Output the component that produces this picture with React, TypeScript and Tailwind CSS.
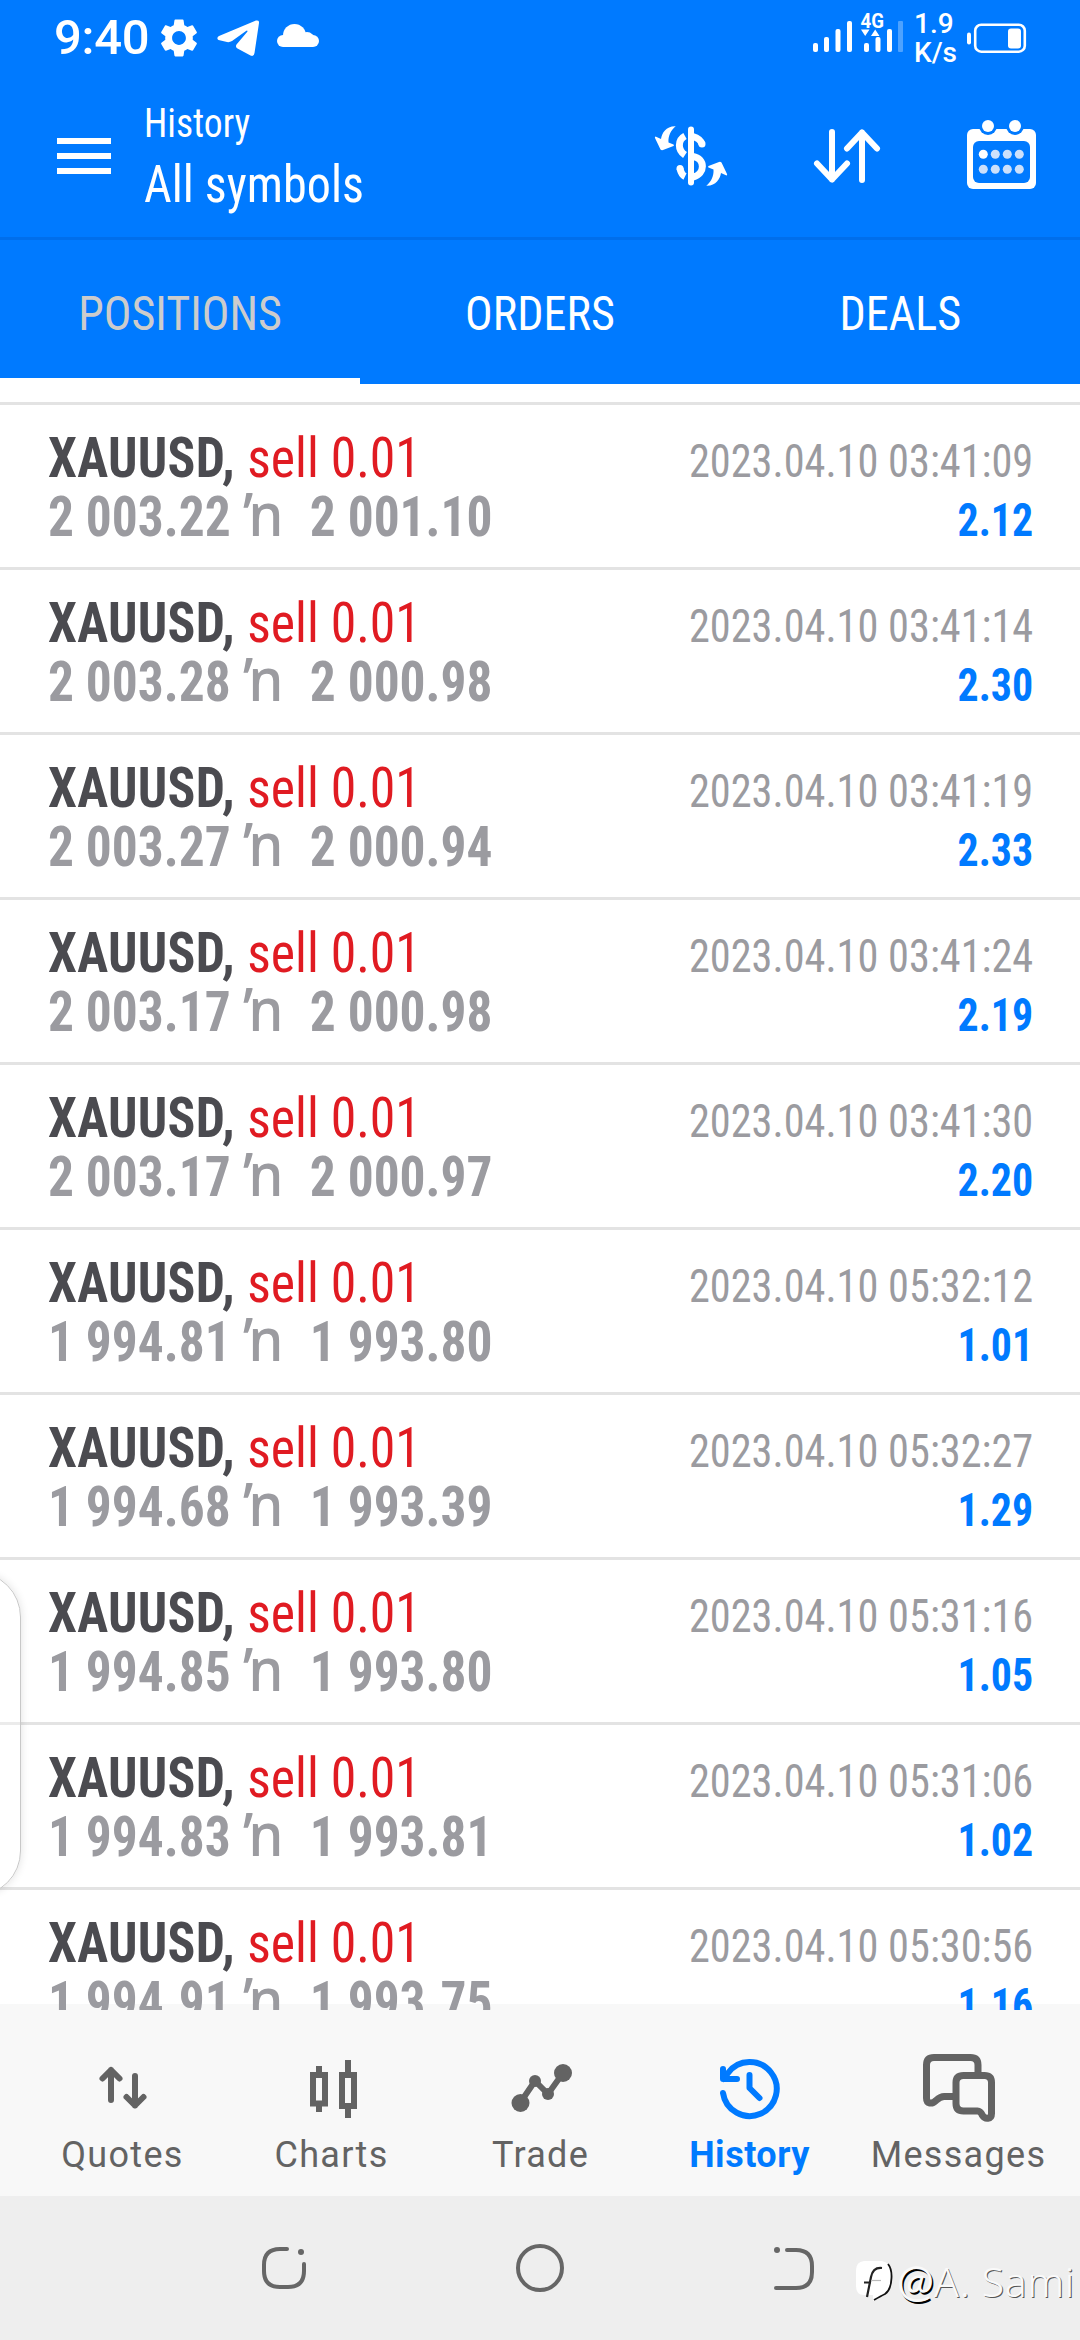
import { useState } from "react"
import type { ReactNode } from "react"
import { MdSettings } from "react-icons/md"

const positions = [
  { open: "2 003.22", close: "2 001.10", time: "2023.04.10 03:41:09", profit: "2.12" },
  { open: "2 003.28", close: "2 000.98", time: "2023.04.10 03:41:14", profit: "2.30" },
  { open: "2 003.27", close: "2 000.94", time: "2023.04.10 03:41:19", profit: "2.33" },
  { open: "2 003.17", close: "2 000.98", time: "2023.04.10 03:41:24", profit: "2.19" },
  { open: "2 003.17", close: "2 000.97", time: "2023.04.10 03:41:30", profit: "2.20" },
  { open: "1 994.81", close: "1 993.80", time: "2023.04.10 05:32:12", profit: "1.01" },
  { open: "1 994.68", close: "1 993.39", time: "2023.04.10 05:32:27", profit: "1.29" },
  { open: "1 994.85", close: "1 993.80", time: "2023.04.10 05:31:16", profit: "1.05" },
  { open: "1 994.83", close: "1 993.81", time: "2023.04.10 05:31:06", profit: "1.02" },
  { open: "1 994.91", close: "1 993.75", time: "2023.04.10 05:30:56", profit: "1.16" },
]

const tabs = ["POSITIONS", "ORDERS", "DEALS"]

function StatusBar() {
  return (
    <div className="flex h-[75px] items-center pl-[54px] pr-[53px] text-white">
      <span className="w-[102px] text-[49px] leading-none font-medium tracking-[-0.3px]">9:40</span>
      <MdSettings className="size-[46px]" />
      <svg className="ml-[15px] h-9 w-[42px]" viewBox="0 0 42 36" fill="currentColor">
        <path d="M2 16 39 .5Q42.5 0 42 3L37.5 33Q37 37 33.5 35.5L20.5 28.5Q18 27 19.5 24.5L30.5 11.5Q30.5 10 29 11L15 21Q12.5 22.5 10 22L1.5 20Q-1 18 2 16Z" />
      </svg>
      <svg className="mb-1 ml-[18px] h-[23px] w-[42px]" viewBox="0 0 42 23" fill="currentColor">
        <circle cx="17.5" cy="11.5" r="11.5" />
        <circle cx="6" cy="17" r="6" />
        <circle cx="30" cy="15.5" r="7.5" />
        <circle cx="36" cy="17" r="6" />
        <rect x="6" y="12" width="30" height="11" />
      </svg>

      <svg className="ml-auto h-[75px] w-[93px]" viewBox="811 0 93 75" fill="currentColor">
        <rect x="812" y="43" width="5" height="9" rx="2" />
        <rect x="823" y="37" width="5" height="15" rx="2" />
        <rect x="834.5" y="29" width="5" height="23" rx="2" />
        <rect x="846" y="21" width="5" height="31" rx="2" />
        <text x="859.5" y="28" fontSize="20" fontWeight="700" textLength="23.5" lengthAdjust="spacingAndGlyphs">
          4G
        </text>
        <path d="M860 29.5h8.5L864.2 36zM870 36h8.5L874.2 29.5z" />
        <rect x="863" y="43" width="5" height="9" rx="2" />
        <rect x="874.5" y="37" width="5" height="15" rx="2" />
        <rect x="886" y="29" width="5" height="23" rx="2" />
        <rect x="897" y="21" width="5" height="31" rx="1" opacity="0.3" />
      </svg>
      <div className="ml-[9px] w-[45px] text-[28px] leading-[29px] font-medium">
        <div>1.9</div>
        <div>K/s</div>
      </div>
      <svg className="ml-2 h-[30px] w-[60px]" viewBox="966 20.5 60 30">
        <rect x="966" y="30" width="4" height="12" rx="2" fill="currentColor" />
        <rect x="974.2" y="22.2" width="49.6" height="27" rx="6" fill="none" stroke="currentColor" strokeWidth="2.6" />
        <rect x="1007" y="26" width="13" height="20" rx="3" fill="currentColor" />
      </svg>
    </div>
  )
}

function DollarIcon() {
  const arrow =
    "M24.7 6.3C15 6 11 13 10 19L4.5 16.5Q3.5 17 4 18L9.5 29.5Q10.5 30.5 12 30L22.5 26Q23.5 25 22.5 24.5L17.5 22.5C17 16 20 10 24.7 6.3Z"
  return (
    <svg className="h-[72px] w-20" viewBox="0 0 80 72" fill="none" stroke="currentColor" strokeWidth="7">
      <path d="M40 9.500V62.500" strokeWidth="6" strokeLinecap="round" />
      <path d="M34 16C26.500 20 26.500 30 34 35M42 16.500Q49 18.500 51 24" />
      <path d="M42 36.500C54.500 38.500 54.500 54 42 57M29 48.500C30 53 31 55 34 56.500" />
      <circle cx="51" cy="24" r="3.5" fill="currentColor" stroke="none" />
      <circle cx="29" cy="48.5" r="3.5" fill="currentColor" stroke="none" />
      <g fill="currentColor" stroke="none">
        <path d={arrow} />
        <path d={arrow} transform="rotate(180 40 36)" />
      </g>
    </svg>
  )
}

function SortIcon() {
  return (
    <svg
      className="h-[60px] w-[68px]"
      viewBox="812 126 68 60"
      fill="none"
      stroke="currentColor"
      strokeWidth="6"
      strokeLinecap="round"
      strokeLinejoin="round"
    >
      <path d="M831 132V179.500M816 163.500 831 179.500 846 163.500" />
      <path d="M861 180V132.500M846 148.500 861 132.500 876 148.500" />
    </svg>
  )
}

function CalendarIcon() {
  return (
    <svg className="h-[69px] w-[69px]" viewBox="966 120 69 69">
      <rect x="966" y="129" width="69" height="60" rx="6" fill="#fff" />
      <rect x="972" y="141" width="57" height="42" rx="6" fill="#007aff" />
      {[987, 1014].map((x) => (
        <g key={x}>
          <circle cx={x} cy="126" r="9" fill="#007aff" />
          <circle cx={x} cy="126" r="6" fill="#fff" />
        </g>
      ))}
      {[982.3, 994.3, 1006.3, 1018.3].map((x, i) => (
        <g key={x}>
          <circle cx={x} cy="154.3" r="4.5" fill={i === 0 ? "#fff" : "#cce0fb"} />
          <circle cx={x} cy="169.3" r="4.5" fill="#cce0fb" />
        </g>
      ))}
    </svg>
  )
}

function Header() {
  return (
    <header className="flex h-[162px] pr-[44px] pl-[57px] text-white">
      <button className="mt-[63px] flex h-9 w-[54px] flex-col justify-between">
        <span className="h-1.5 w-full bg-white" />
        <span className="h-1.5 w-full bg-white" />
        <span className="h-1.5 w-full bg-white" />
      </button>
      <div className="ml-[33px] pt-[24px] font-stretch-condensed">
        <div className="origin-left scale-x-[0.94] text-[40px] leading-[50px]">History</div>
        <div className="mt-[3px] origin-left scale-x-[0.925] text-[52px] leading-[66px]">All symbols</div>
      </div>
      <div className="ml-auto flex pt-[45px]">
        <DollarIcon />
        <div className="ml-[82px] pt-1.5">
          <SortIcon />
        </div>
        <div className="ml-[86px]">
          <CalendarIcon />
        </div>
      </div>
    </header>
  )
}

function PositionRow({ open, close, time, profit }: (typeof positions)[number]) {
  return (
    <li className="h-[165px] shrink-0 border-t-3 border-[#e3e3e3] pt-6 pr-[47px] pl-12 leading-[59px] font-stretch-condensed">
      <div className="flex items-baseline justify-between">
        <div className="origin-left scale-x-[0.94] text-[55px] whitespace-pre">
          <span className="font-bold tracking-[0.3px] text-[#4b4b50]">XAUUSD, </span>
          <span className="text-[#e01b22]">sell 0.01</span>
        </div>
        <div className="origin-right scale-x-[0.92] text-[46px] text-[#9b9ba0]">{time}</div>
      </div>
      <div className="-mt-[3px] flex items-baseline justify-between">
        <div className="flex origin-left scale-x-[0.935] items-baseline text-[55px] font-bold text-[#9b9ba0]">
          <span className="w-[209px]">{open}</span>
          <span className="w-[71px] font-['Noto_Sans'] text-[60px] leading-0 font-medium">ŉ</span>
          <span>{close}</span>
        </div>
        <div className="origin-right scale-x-[0.91] text-[46px] font-bold text-[#007aff]">{profit}</div>
      </div>
    </li>
  )
}

function NavItem({ label, active, children }: { label: string; active?: boolean; children: ReactNode }) {
  return (
    <button className={`flex w-[209px] flex-col items-center ${active ? "text-[#007aff]" : "text-[#636363]"}`}>
      <svg
        className="h-[78px] w-[78px]"
        viewBox="0 0 78 78"
        fill="none"
        stroke="currentColor"
        strokeWidth="6"
        strokeLinecap="round"
        strokeLinejoin="round"
      >
        {children}
      </svg>
      <span
        className={
          active
            ? "mt-[7px] text-[36px] leading-[42px] font-bold tracking-[0.5px]"
            : "mt-[7px] text-[36px] leading-[42px] tracking-[1.3px]"
        }
      >
        {label}
      </span>
    </button>
  )
}

function BottomNav() {
  return (
    <nav className="flex h-[186px] bg-[#f8f8f8] pt-[39px] pl-[18px]">
      <NavItem label="Quotes">
        <path d="M27 51V21M18.500 29.500 27 21 35.500 29.500" />
        <path d="M51 27V56.500M42.500 48 51 56.500 59.500 48" />
      </NavItem>
      <NavItem label="Charts">
        <g strokeLinecap="butt" strokeLinejoin="miter">
          <path d="M26 17V26M26 55V63M55 11V26M55 57V69" />
          <path d="M20 26H32V54.500H20ZM49 26H61V57H49Z" />
        </g>
      </NavItem>
      <NavItem label="Trade">
        <path d="M18 54 33 32 46 45 61 24" />
        <g fill="currentColor" stroke="none">
          <circle cx="18.5" cy="54" r="9" />
          <circle cx="33" cy="32" r="6" />
          <circle cx="46" cy="45" r="6" />
          <circle cx="61" cy="24" r="9" />
        </g>
      </NavItem>
      <NavItem label="History" active>
        <path d="M12 44A27 27 0 1 0 17 24L12.500 30M12 20V30H26" />
        <path d="M38.500 26V39L48.500 49" />
      </NavItem>
      <NavItem label="Messages">
        <g strokeWidth="7" transform="translate(-5 0)">
          <path d="M63 23V16Q63 8.500 55.500 8.500H19Q11.500 8.500 11.500 16V49C11.500 55 17 55.500 21 51.500Q26 47 30 47.500H39" />
          <path d="M48.500 26.500H69.500Q76.500 26.500 76.500 33.500V64.500C76.500 70.500 70 70.500 67.500 66.500Q65.500 62 62.500 62H48.500Q41 62 41 54.500V33.500Q41 26.500 48.500 26.500Z" />
        </g>
      </NavItem>
    </nav>
  )
}

function Watermark() {
  return (
    <div className="absolute top-[56px] left-[854px] flex items-baseline font-['Lato'] text-[41px] leading-[56px] font-light whitespace-nowrap text-[#fafafa]">
      <svg className="h-[44px] w-[42px] self-center" viewBox="0 0 42 44">
        <path d="M10 2H28Q37 4 37 13V24Q37 34 27 36L19 42V36H10Q2 36 2 27V11Q2 3 10 2Z" fill="#fff" />
        <path d="M34 5Q38 10 37.500 19Q37 31 31 35Q27 37 20 41" fill="none" stroke="#111" strokeWidth="1.8" />
        <path d="M28 9Q19 8 17 18L13 38M10 23.500H17" fill="none" stroke="#222" strokeWidth="2.2" />
        <path d="M17 21.500H27" fill="none" stroke="#bbb" strokeWidth="1.2" />
      </svg>
      <span className="ml-px w-[37px] text-[44px] font-normal [text-shadow:1.5px_1.5px_0_#000]">@</span>
      <span className="font-['Noto_Sans'] tracking-[0.7px] [text-shadow:1px_1px_0_#555]">A. Sami</span>
    </div>
  )
}

function SystemNav() {
  return (
    <div className="relative flex h-36 items-center bg-[#eee] pl-[260px] text-[#666]">
      <svg className="size-12" viewBox="260 2244 48 48" fill="none" stroke="currentColor" strokeWidth="4" strokeLinecap="round">
        <path d="M287 2249H280Q264 2249 264 2265V2271Q264 2287 280 2287H288Q304 2287 304 2271V2264" />
        <circle cx="301" cy="2252" r="3" fill="currentColor" stroke="none" />
      </svg>
      <div className="ml-[208px] size-12 rounded-full border-4 border-[#666]" />
      <svg className="ml-[206px] size-12" viewBox="770 2244 48 48" fill="none" stroke="currentColor" strokeWidth="4" strokeLinecap="round">
        <path d="M787 2250H796Q812 2250 812 2266V2272Q812 2288 796 2288H776" />
        <circle cx="777" cy="2250" r="3" fill="currentColor" stroke="none" />
      </svg>
      <Watermark />
    </div>
  )
}

export default function App() {
  const [activeTab, setActiveTab] = useState("POSITIONS")

  return (
    <div className="relative flex h-[2340px] w-[1080px] flex-col overflow-hidden bg-white font-['Roboto',sans-serif]">
      <div className="bg-[#007aff]">
        <StatusBar />
        <Header />
        <div className="grid h-[147px] grid-cols-3 border-t-3 border-[#006eeb] font-stretch-condensed">
          {tabs.map((tab) => (
            <button
              key={tab}
              onClick={() => setActiveTab(tab)}
              className={`border-b-6 pt-2.5 text-[48px] ${
                activeTab === tab ? "border-white text-[#ccc]" : "border-transparent text-white"
              }`}
            >
              <span className="inline-block scale-x-[0.96]">{tab}</span>
            </button>
          ))}
        </div>
      </div>

      <ul className="flex h-[1626px] flex-col overflow-hidden bg-[linear-gradient(to_top,#f8f8f8_6px,#fff_6px)] pt-[18px]">
        {positions.map((position) => (
          <PositionRow key={position.time} {...position} />
        ))}
      </ul>

      <BottomNav />
      <SystemNav />

      {/* edge panel handle */}
      <div className="absolute top-[1572px] -left-[100px] h-[324px] w-[121px] rounded-[45px] border border-[#c8c8c8] bg-white/30 shadow-[0_0_8px_rgba(0,0,0,0.12)]" />
    </div>
  )
}
